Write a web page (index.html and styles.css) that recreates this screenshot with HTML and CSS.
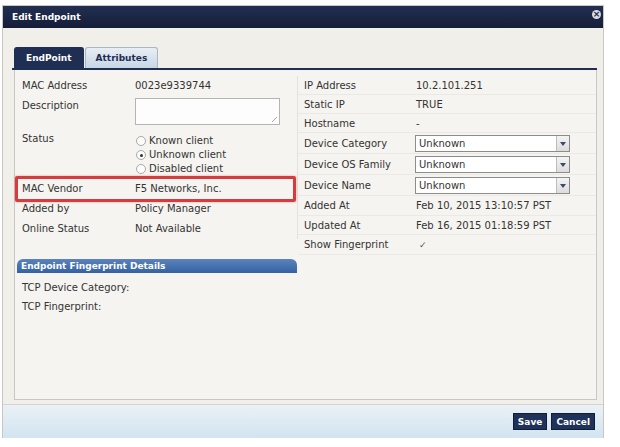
FILE: index.html
```html
<!DOCTYPE html>
<html lang="en">
<head>
    <meta charset="UTF-8">
    <title>Edit Endpoint</title>
    <link rel="stylesheet" href="styles.css">
</head>
<body>
    <div class="dialog">
        <div class="titlebar">
            <span class="title">Edit Endpoint</span>
            <span class="close">&times;</span>
        </div>
        <div class="dialog-body">
            <div class="tabs">
                <div class="tab active">EndPoint</div>
                <div class="tab">Attributes</div>
            </div>
            <div class="panel">
                <div class="columns">
                    <div class="col col-left">
                        <div class="row"><div class="label">MAC Address</div><div class="value">0023e9339744</div></div>
                        <div class="row row-desc"><div class="label">Description</div><div class="value"><div class="textarea"></div></div></div>
                        <div class="row row-status">
                            <div class="label">Status</div>
                            <div class="value radios">
                                <div class="radio-item"><span class="radio"></span>Known client</div>
                                <div class="radio-item"><span class="radio checked"></span>Unknown client</div>
                                <div class="radio-item"><span class="radio"></span>Disabled client</div>
                            </div>
                        </div>
                        <div class="row highlight"><div class="label">MAC Vendor</div><div class="value">F5 Networks, Inc.</div></div>
                        <div class="row"><div class="label">Added by</div><div class="value">Policy Manager</div></div>
                        <div class="row"><div class="label">Online Status</div><div class="value">Not Available</div></div>
                    </div>
                    <div class="col col-right">
                        <div class="row short"><div class="label">IP Address</div><div class="value">10.2.101.251</div></div>
                        <div class="row short"><div class="label">Static IP</div><div class="value">TRUE</div></div>
                        <div class="row short"><div class="label">Hostname</div><div class="value">-</div></div>
                        <div class="row tall"><div class="label">Device Category</div><div class="value"><div class="select">Unknown<span class="arrow"></span></div></div></div>
                        <div class="row tall"><div class="label">Device OS Family</div><div class="value"><div class="select">Unknown<span class="arrow"></span></div></div></div>
                        <div class="row tall"><div class="label">Device Name</div><div class="value"><div class="select">Unknown<span class="arrow"></span></div></div></div>
                        <div class="row mid"><div class="label">Added At</div><div class="value">Feb 10, 2015 13:10:57 PST</div></div>
                        <div class="row mid"><div class="label">Updated At</div><div class="value">Feb 16, 2015 01:18:59 PST</div></div>
                        <div class="row mid"><div class="label">Show Fingerprint</div><div class="value"><span class="check">&#10003;</span></div></div>
                    </div>
                </div>
                <div class="fingerprint">
                    <div class="fp-head">Endpoint Fingerprint Details</div>
                    <div class="fp-row">TCP Device Category:</div>
                    <div class="fp-row">TCP Fingerprint:</div>
                </div>
            </div>
        </div>
        <div class="footer">
            <button class="btn">Save</button>
            <button class="btn">Cancel</button>
        </div>
    </div>
</body>
</html>
```

FILE: styles.css
```css
body {
    margin: 0;
    background: #fff;
    font-family: "DejaVu Sans", Verdana, sans-serif;
    font-size: 10px;
    color: #333;
}

.dialog {
    margin: 6px 0 0 3px;
    width: 600px;
    height: 432px;
    display: flex;
    flex-direction: column;
    background: #f1efe9;
    box-shadow: 0 0 0 1px #c9c7c1;
}

.titlebar {
    height: 22px;
    display: flex;
    align-items: center;
    justify-content: space-between;
    padding: 0 2px 0 9px;
    background: linear-gradient(#222f52, #151e38);
    color: #fff;
}

.title {
    font-weight: bold;
    font-size: 9px;
}

.close {
    width: 9px;
    height: 9px;
    border-radius: 50%;
    background: #d9dbe0;
    color: #1c2846;
    font-size: 9px;
    font-weight: bold;
    line-height: 9px;
    text-align: center;
    margin-top: -5px;
}

.dialog-body {
    flex: 1;
    padding: 19px 6px 4px 11px;
    display: flex;
    flex-direction: column;
}

.tabs {
    display: flex;
    gap: 1px;
    border-bottom: 2px solid #1f2e53;
    margin-left: -2px;
    padding-left: 2px;
}

.tab {
    height: 20px;
    line-height: 21px;
    padding: 0 10px;
    font-size: 9px;
    font-weight: bold;
    color: #1f2e53;
    border: 1px solid #aab6c5;
    border-bottom: none;
    border-radius: 3px 3px 0 0;
    background: linear-gradient(#e8eef5, #c8d6e5);
}

.tab.active {
    padding: 0 11px;
    background: #1f2e53;
    border-color: #1f2e53;
    color: #fff;
}

.panel {
    flex: 1;
    border: 1px solid #c9c7c0;
    border-top: none;
    background: #f5f4f0;
    padding-top: 6px;
}

.columns {
    display: flex;
    align-items: flex-start;
}

.col-left {
    width: 282px;
    border-right: 1px solid #e4e2dc;
}

.col-right {
    flex: 1;
}

.row {
    display: flex;
    height: 20px;
    line-height: 20px;
}

.row.short {
    height: 19px;
    line-height: 19px;
}

.row.tall {
    height: 21px;
    line-height: 21px;
}

.row.mid {
    height: 19.5px;
    line-height: 19.5px;
}

.col-right .row {
    border-bottom: 1px solid #ebe9e3;
    box-sizing: border-box;
}

.col-left .label {
    width: 113px;
    padding-left: 7px;
}

.col-right .label {
    width: 112px;
    padding-left: 6px;
}

.row-desc {
    height: 33px;
}

.textarea {
    width: 143px;
    height: 25px;
    margin-top: 2px;
    border: 1px solid #b4b4b4;
    background: #fdfdfd;
    position: relative;
}

.textarea::after {
    content: "";
    position: absolute;
    right: 2px;
    bottom: 2px;
    width: 5px;
    height: 5px;
    background: linear-gradient(135deg, transparent 45%, #aaa 45%, #aaa 55%, transparent 55%);
}

.row-status {
    height: 50px;
}

.radios {
    padding-top: 5px;
    line-height: 14px;
}

.radio-item {
    display: flex;
    align-items: center;
    gap: 3px;
    height: 14px;
}

.radio {
    width: 8px;
    height: 8px;
    border: 1px solid #a9a9a9;
    border-radius: 50%;
    background: #fcfcfc;
    margin-left: 1px;
    position: relative;
}

.radio.checked::after {
    content: "";
    position: absolute;
    left: 2.5px;
    top: 2.5px;
    width: 3px;
    height: 3px;
    border-radius: 50%;
    background: #333;
}

.highlight {
    position: relative;
}

.highlight::after {
    content: "";
    position: absolute;
    top: -3px;
    bottom: -3px;
    left: 0;
    right: 1px;
    border: 3px solid #d63b3d;
    border-radius: 2px;
    box-shadow: 0 0 2px rgba(200, 40, 40, 0.5);
}

.select {
    margin-top: 2px;
    width: 150px;
    height: 15px;
    line-height: 15px;
    padding-left: 3px;
    border: 1px solid #8c8c8c;
    background: #fff;
    position: relative;
    margin-left: -1px;
}

.arrow {
    position: absolute;
    right: 0;
    top: 0;
    width: 12px;
    height: 15px;
    border-left: 1px solid #bdbdbd;
    background: linear-gradient(#f4f4f4, #dcdcdc);
}

.arrow::after {
    content: "";
    position: absolute;
    left: 3px;
    top: 6px;
    border-left: 3px solid transparent;
    border-right: 3px solid transparent;
    border-top: 4px solid #3b4a6b;
}

.check {
    padding-left: 3px;
    font-size: 9px;
    color: #555;
}

.fingerprint {
    width: 280px;
    margin: 4.5px 0 0 2px;
}

.fp-head {
    height: 14px;
    line-height: 15px;
    padding-left: 4px;
    border-radius: 6px 6px 0 0;
    background: linear-gradient(#5b83bc, #3462a2);
    color: #fff;
    font-size: 9px;
    font-weight: bold;
}

.fp-row {
    height: 19px;
    line-height: 19px;
    padding-left: 5px;
}

.fp-head + .fp-row {
    margin-top: 5px;
}

.footer {
    height: 33px;
    border-top: 1px solid #d6d4ce;
    background: linear-gradient(#eaf1f6, #d2e4f1);
    display: flex;
    justify-content: flex-end;
    align-items: center;
    gap: 4px;
    padding-right: 8px;
}

.btn {
    height: 17px;
    padding: 0 4px;
    border: 1px solid #111c36;
    background: #1f3259;
    color: #fff;
    font-family: "DejaVu Sans", Verdana, sans-serif;
    font-size: 9px;
    font-weight: bold;
}
```
